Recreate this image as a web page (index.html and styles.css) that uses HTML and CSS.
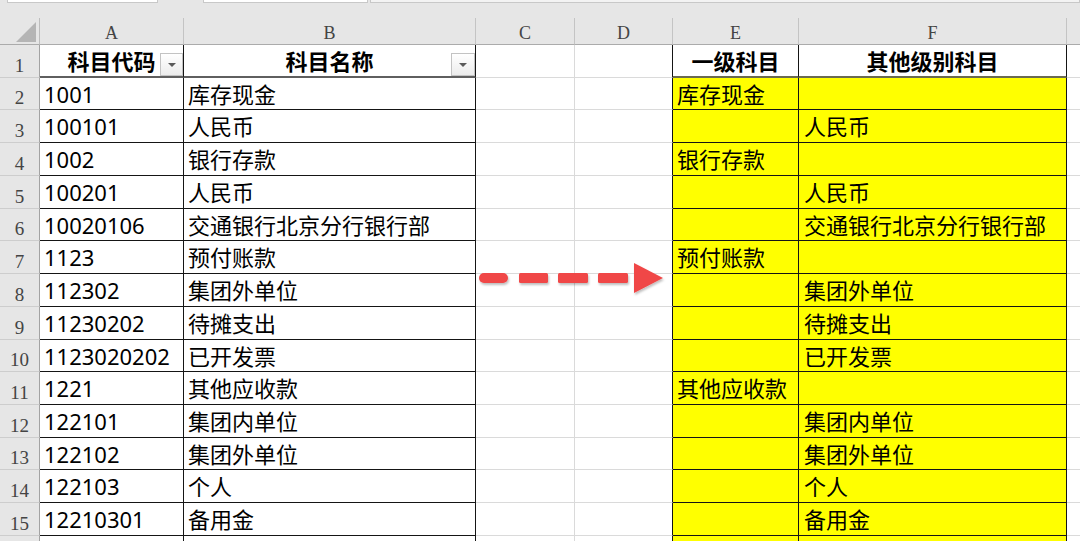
FILE: index.html
```html
<!DOCTYPE html>
<html lang="zh-CN">
<head>
<meta charset="utf-8">
<title>科目</title>
<link rel="stylesheet" href="styles.css">
</head>
<body>
<div class="sheet">
  <div class="top">
    <div class="tab t1"></div>
    <div class="tab t2"></div>
    <div class="tab t3"></div>
  </div>
  <div class="grid">
    <div class="row">
      <div class="corner"><svg width="20" height="20" viewBox="0 0 20 20"><polygon points="20,0 20,20 0,20" fill="#b5b5b5"/></svg></div>
      <div class="ch">A</div><div class="ch">B</div><div class="ch">C</div><div class="ch">D</div><div class="ch">E</div><div class="ch">F</div><div class="ch last"></div>
    </div>
    <div class="row">
      <div class="rh">1</div>
      <div class="ca hd">科目代码<span class="filter"><i></i></span></div>
      <div class="cb hd">科目名称<span class="filter"><i></i></span></div>
      <div class="cc"></div><div class="cd"></div>
      <div class="ce hd">一级科目</div><div class="cf hd">其他级别科目</div><div class="cx"></div>
    </div>
    <div class="row"><div class="rh">2</div><div class="ca">1001</div><div class="cb">库存现金</div><div class="cc"></div><div class="cd"></div><div class="ce">库存现金</div><div class="cf"></div><div class="cx"></div></div>
    <div class="row"><div class="rh">3</div><div class="ca">100101</div><div class="cb">人民币</div><div class="cc"></div><div class="cd"></div><div class="ce"></div><div class="cf">人民币</div><div class="cx"></div></div>
    <div class="row"><div class="rh">4</div><div class="ca">1002</div><div class="cb">银行存款</div><div class="cc"></div><div class="cd"></div><div class="ce">银行存款</div><div class="cf"></div><div class="cx"></div></div>
    <div class="row"><div class="rh">5</div><div class="ca">100201</div><div class="cb">人民币</div><div class="cc"></div><div class="cd"></div><div class="ce"></div><div class="cf">人民币</div><div class="cx"></div></div>
    <div class="row"><div class="rh">6</div><div class="ca">10020106</div><div class="cb">交通银行北京分行银行部</div><div class="cc"></div><div class="cd"></div><div class="ce"></div><div class="cf">交通银行北京分行银行部</div><div class="cx"></div></div>
    <div class="row"><div class="rh">7</div><div class="ca">1123</div><div class="cb">预付账款</div><div class="cc"></div><div class="cd"></div><div class="ce">预付账款</div><div class="cf"></div><div class="cx"></div></div>
    <div class="row"><div class="rh">8</div><div class="ca">112302</div><div class="cb">集团外单位</div><div class="cc"></div><div class="cd"></div><div class="ce"></div><div class="cf">集团外单位</div><div class="cx"></div></div>
    <div class="row"><div class="rh">9</div><div class="ca">11230202</div><div class="cb">待摊支出</div><div class="cc"></div><div class="cd"></div><div class="ce"></div><div class="cf">待摊支出</div><div class="cx"></div></div>
    <div class="row"><div class="rh">10</div><div class="ca">1123020202</div><div class="cb">已开发票</div><div class="cc"></div><div class="cd"></div><div class="ce"></div><div class="cf">已开发票</div><div class="cx"></div></div>
    <div class="row"><div class="rh">11</div><div class="ca">1221</div><div class="cb">其他应收款</div><div class="cc"></div><div class="cd"></div><div class="ce">其他应收款</div><div class="cf"></div><div class="cx"></div></div>
    <div class="row"><div class="rh">12</div><div class="ca">122101</div><div class="cb">集团内单位</div><div class="cc"></div><div class="cd"></div><div class="ce"></div><div class="cf">集团内单位</div><div class="cx"></div></div>
    <div class="row"><div class="rh">13</div><div class="ca">122102</div><div class="cb">集团外单位</div><div class="cc"></div><div class="cd"></div><div class="ce"></div><div class="cf">集团外单位</div><div class="cx"></div></div>
    <div class="row"><div class="rh">14</div><div class="ca">122103</div><div class="cb">个人</div><div class="cc"></div><div class="cd"></div><div class="ce"></div><div class="cf">个人</div><div class="cx"></div></div>
    <div class="row"><div class="rh">15</div><div class="ca">12210301</div><div class="cb">备用金</div><div class="cc"></div><div class="cd"></div><div class="ce"></div><div class="cf">备用金</div><div class="cx"></div></div>
    <div class="row"><div class="rh"></div><div class="ca"></div><div class="cb"></div><div class="cc"></div><div class="cd"></div><div class="ce"></div><div class="cf"></div><div class="cx"></div></div>
  </div>
  <svg class="arrow" width="200" height="40" viewBox="0 0 200 40">
    <defs>
      <filter id="sh" x="-10%" y="-50%" width="120%" height="200%">
        <feDropShadow dx="1" dy="2" stdDeviation="1.2" flood-color="#000" flood-opacity="0.25"/>
      </filter>
    </defs>
    <g fill="#f04646" filter="url(#sh)">
      <rect x="3" y="15" width="29" height="10" rx="5"/>
      <rect x="43" y="15" width="29" height="10" rx="1.5"/>
      <rect x="82" y="15" width="30" height="10" rx="1.5"/>
      <rect x="122" y="15" width="30" height="10" rx="1.5"/>
      <polygon points="158,5 158,35 187,20"/>
    </g>
  </svg>
</div>
</body>
</html>
```
FILE: styles.css
```css
html, body {
  margin: 0;
  padding: 0;
  background: #fff;
}
body {
  width: 1080px;
  height: 541px;
  overflow: hidden;
}
.sheet {
  position: relative;
  width: 1080px;
  height: 541px;
  overflow: hidden;
  background: #e6e6e6;
}
.top {
  height: 18px;
  display: flex;
  align-items: flex-start;
  background: #e6e6e6;
}
.tab {
  height: 2px;
  background: #fff;
  border: 1px solid #c8c8c8;
  border-top: none;
}
.t1 { margin-left: 7px; width: 149px; }
.t2 { margin-left: 45px; width: 163px; }
.t3 { margin-left: 2px; flex: 1; background: #f3f3f3; }

.grid {
  display: grid;
  grid-template-columns: 40px 144px 292px 99px 98px 126px 268px 13px;
  grid-template-rows: 27px 33px 32px 33px 33px 33px 32px 33px 33px 33px 32px 33px 33px 32px 33px 33px 33px;
  background: #fff;
  font-family: "Noto Sans", "Noto Sans CJK SC", sans-serif;
  font-size: 22px;
  color: #000;
}
.row { display: contents; }

.corner {
  background: #e6e6e6;
  border-right: 1px solid #bdbdbd;
  border-bottom: 1px solid #ababab;
  display: flex;
  align-items: flex-end;
  justify-content: flex-end;
  padding: 0 3px 2px 0;
  box-sizing: border-box;
}
.corner svg { display: block; }

.ch {
  background: #e6e6e6;
  border-right: 1px solid #c4c4c4;
  border-bottom: 1px solid #ababab;
  display: flex;
  align-items: flex-end;
  justify-content: center;
  padding-bottom: 2px;
  box-sizing: border-box;
  font-family: "Liberation Serif", "DejaVu Serif", serif;
  font-size: 18px;
  line-height: 1;
  color: #444;
}
.ch.last { border-right: none; }

.rh {
  background: #e6e6e6;
  border-right: 1px solid #a3a3a3;
  border-bottom: 1px solid #cdcdcd;
  display: flex;
  align-items: flex-end;
  justify-content: center;
  padding-bottom: 2px;
  box-sizing: border-box;
  font-family: "Liberation Serif", "DejaVu Serif", serif;
  font-size: 19px;
  line-height: 1;
  color: #444;
}

.ca, .cb, .cc, .cd, .ce, .cf, .cx {
  box-sizing: border-box;
  display: flex;
  align-items: center;
  padding-left: 4px;
  line-height: 1;
  white-space: nowrap;
  overflow: hidden;
  position: relative;
}
.ca, .cb {
  border-right: 1px solid #151515;
  border-bottom: 1px solid #151515;
}
.cc {
  border-right: 1px solid #dadada;
  border-bottom: 1px solid #dadada;
}
.cd {
  border-right: 1px solid #151515;
  border-bottom: 1px solid #dadada;
}
.ce, .cf {
  background: #ffff00;
  border-right: 1px solid #151515;
  border-bottom: 1px solid #151515;
}
.ce { padding-left: 4px; }
.cf { padding-left: 5px; }
.cx {
  border-bottom: 1px solid #dadada;
}

.hd {
  background: #fff;
  font-weight: 700;
  justify-content: center;
  padding-left: 0;
  border-bottom: 2px solid #5f5f5f;
}
.ce.hd, .cf.hd { border-bottom-color: #6a6a50; padding-left: 0; }

.filter {
  position: absolute;
  right: 0;
  bottom: 0;
  width: 23px;
  height: 23px;
  box-sizing: border-box;
  border: 1px solid #c3c3c3;
  background: linear-gradient(#ffffff, #ececec);
  display: flex;
  align-items: center;
  justify-content: center;
}
.cb .filter { width: 24px; }
.filter i {
  display: block;
  width: 0;
  height: 0;
  border-left: 4px solid transparent;
  border-right: 4px solid transparent;
  border-top: 4px solid #5a5a5a;
  margin-top: 1px;
}

.arrow {
  position: absolute;
  left: 476px;
  top: 258px;
}
```
